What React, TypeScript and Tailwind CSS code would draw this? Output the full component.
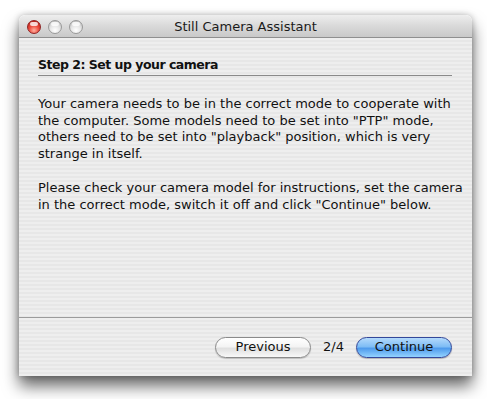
import React from "react";

const font = { fontFamily: '"DejaVu Sans", "Liberation Sans", sans-serif' };

function Light({ red }: { red?: boolean }) {
  return (
    <div
      className={
        "w-[14px] h-[14px] rounded-full border " +
        (red
          ? "border-[#8e2222] bg-[radial-gradient(circle_at_50%_78%,#ffb0a0_0%,#ec4a3c_45%,#a81812_100%)]"
          : "border-[#999999] bg-[radial-gradient(circle_at_50%_78%,#ffffff_0%,#e6e6e6_45%,#b5b5b5_100%)]")
      }
    >
      <div className="mx-auto mt-[1px] w-[8px] h-[4px] rounded-full bg-white/80" />
    </div>
  );
}

export default function App() {
  const stripes =
    "bg-[repeating-linear-gradient(180deg,#eeeeee_0px,#eeeeee_2px,#e7e7e7_2px,#e7e7e7_4px)]";
  return (
    <div className="w-[487px] h-[399px] bg-white overflow-hidden" style={font}>
      <div className="ml-[19px] mt-[15px] w-[453px] h-[361px] rounded-t-[6px] shadow-[0_10px_16px_rgba(0,0,0,0.6),0_0_6px_rgba(0,0,0,0.25)] flex flex-col overflow-hidden">
        <div className="h-[23px] shrink-0 relative flex items-center bg-[linear-gradient(180deg,#eeeeee_0%,#d9d9d9_50%,#c9c9c9_100%)] border-b border-[#8f8f8f] rounded-t-[6px]">
          <div className="flex gap-[7px] ml-[8px] mt-[1px]">
            <Light red />
            <Light />
            <Light />
          </div>
          <div className="absolute inset-0 pt-[1px] flex items-center justify-center text-[13px] text-[#1a1a1a]">
            Still Camera Assistant
          </div>
        </div>
        <div className={"h-[280px] shrink-0 border-b border-[#9b9b9b] px-[19px] " + stripes}>
          <div className="mt-[19px] mr-[1px] border-b border-[#8a8a8a] pb-[2px] text-[12.5px] tracking-[-0.5px] font-bold text-[#111] leading-[16px]">
            Step 2: Set up your camera
          </div>
          <div className="mt-[20px] text-[13px] leading-[16.5px] text-[#111] whitespace-nowrap">
            <div>Your camera needs to be in the correct mode to cooperate with</div>
            <div>the computer. Some models need to be set into "PTP" mode,</div>
            <div>others need to be set into "playback" position, which is very</div>
            <div>strange in itself.</div>
          </div>
          <div className="mt-[18px] text-[13px] leading-[16.8px] text-[#111] whitespace-nowrap">
            <div>Please check your camera model for instructions, set the camera</div>
            <div>in the correct mode, switch it off and click "Continue" below.</div>
          </div>
        </div>
        <div className={"flex-1 flex items-center justify-end pr-[20px] " + stripes}>
          <button className="w-[96px] h-[21px] rounded-full border border-[#8a8a8a] bg-[linear-gradient(180deg,#ffffff_0%,#f4f4f4_45%,#e0e0e0_55%,#f8f8f8_100%)] text-[13px] text-[#111] flex items-center justify-center shadow-[0_1px_1px_rgba(0,0,0,0.2)]">
            Previous
          </button>
          <span className="ml-[12px] mr-[12px] text-[13px] text-[#111]">2/4</span>
          <button className="w-[96px] h-[21px] rounded-full border border-[#34489a] bg-[linear-gradient(180deg,#b4dafc_0%,#7fbdf5_45%,#4f9bec_55%,#93d3ff_100%)] text-[13px] text-[#111] flex items-center justify-center shadow-[0_1px_1px_rgba(0,0,0,0.25)]">
            Continue
          </button>
        </div>
      </div>
    </div>
  );
}
